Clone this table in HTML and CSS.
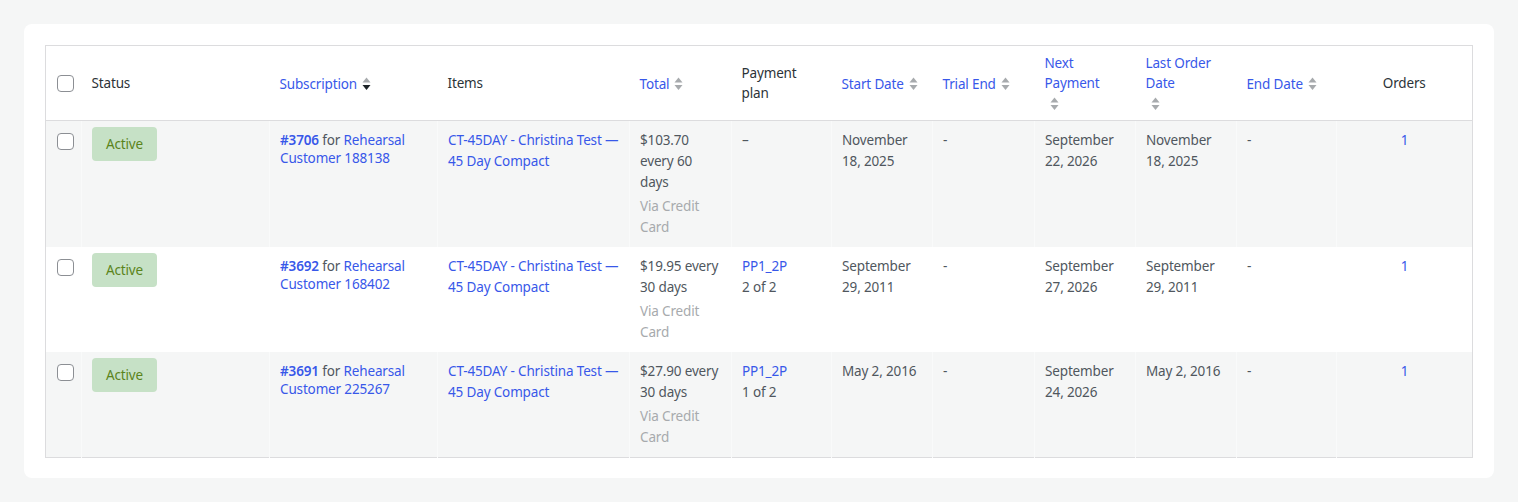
FILE: index.html
```html
<!DOCTYPE html>
<html lang="en">
<head>
<meta charset="utf-8">
<title>Subscriptions</title>
<link rel="stylesheet" href="styles.css">
</head>
<body>
<div class="card">
  <table class="list">
    <colgroup>
      <col class="c-cb"><col class="c-status"><col class="c-sub"><col class="c-items"><col class="c-total"><col class="c-plan"><col class="c-date"><col class="c-trial"><col class="c-date"><col class="c-date"><col class="c-end"><col class="c-orders">
    </colgroup>
    <thead>
      <tr>
        <th class="cb"><input type="checkbox" class="check"></th>
        <th>Status</th>
        <th><a class="sort-link"><span class="lbl">Subscription</span><svg class="sort" width="9" height="14" viewBox="0 0 9 14"><path d="M0.5 5.5 L4.5 0.5 L8.5 5.5 Z" fill="#a7aaad"/><path d="M0.5 8 L4.5 13 L8.5 8 Z" fill="#1d2327"/></svg></a></th>
        <th>Items</th>
        <th><a class="sort-link"><span class="lbl">Total</span><svg class="sort" width="9" height="14" viewBox="0 0 9 14"><path d="M0.5 5.5 L4.5 0.5 L8.5 5.5 Z" fill="#a7aaad"/><path d="M0.5 8 L4.5 13 L8.5 8 Z" fill="#a7aaad"/></svg></a></th>
        <th>Payment plan</th>
        <th><a class="sort-link"><span class="lbl">Start Date</span><svg class="sort" width="9" height="14" viewBox="0 0 9 14"><path d="M0.5 5.5 L4.5 0.5 L8.5 5.5 Z" fill="#a7aaad"/><path d="M0.5 8 L4.5 13 L8.5 8 Z" fill="#a7aaad"/></svg></a></th>
        <th><a class="sort-link"><span class="lbl">Trial End</span><svg class="sort" width="9" height="14" viewBox="0 0 9 14"><path d="M0.5 5.5 L4.5 0.5 L8.5 5.5 Z" fill="#a7aaad"/><path d="M0.5 8 L4.5 13 L8.5 8 Z" fill="#a7aaad"/></svg></a></th>
        <th><a class="sort-link"><span class="lbl">Next Payment</span><svg class="sort" width="9" height="14" viewBox="0 0 9 14"><path d="M0.5 5.5 L4.5 0.5 L8.5 5.5 Z" fill="#a7aaad"/><path d="M0.5 8 L4.5 13 L8.5 8 Z" fill="#a7aaad"/></svg></a></th>
        <th><a class="sort-link"><span class="lbl">Last Order Date</span><svg class="sort" width="9" height="14" viewBox="0 0 9 14"><path d="M0.5 5.5 L4.5 0.5 L8.5 5.5 Z" fill="#a7aaad"/><path d="M0.5 8 L4.5 13 L8.5 8 Z" fill="#a7aaad"/></svg></a></th>
        <th><a class="sort-link"><span class="lbl">End Date</span><svg class="sort" width="9" height="14" viewBox="0 0 9 14"><path d="M0.5 5.5 L4.5 0.5 L8.5 5.5 Z" fill="#a7aaad"/><path d="M0.5 8 L4.5 13 L8.5 8 Z" fill="#a7aaad"/></svg></a></th>
        <th class="center">Orders</th>
      </tr>
    </thead>
    <tbody>
      <tr class="alt">
        <td class="cb"><input type="checkbox" class="check"></td>
        <td><span class="badge">Active</span></td>
        <td><div class="sub"><a class="strong">#3706</a> for <a>Rehearsal Customer 188138</a></div></td>
        <td><a>CT-45DAY - Christina Test — 45 Day Compact</a></td>
        <td><div>$103.70 every 60 days</div><div class="via">Via Credit Card</div></td>
        <td>–</td>
        <td>November 18, 2025</td>
        <td>-</td>
        <td>September 22, 2026</td>
        <td>November 18, 2025</td>
        <td>-</td>
        <td class="center"><a>1</a></td>
      </tr>
      <tr>
        <td class="cb"><input type="checkbox" class="check"></td>
        <td><span class="badge">Active</span></td>
        <td><div class="sub"><a class="strong">#3692</a> for <a>Rehearsal Customer 168402</a></div></td>
        <td><a>CT-45DAY - Christina Test — 45 Day Compact</a></td>
        <td><div>$19.95 every 30 days</div><div class="via">Via Credit Card</div></td>
        <td><a>PP1_2P</a><div>2 of 2</div></td>
        <td>September 29, 2011</td>
        <td>-</td>
        <td>September 27, 2026</td>
        <td>September 29, 2011</td>
        <td>-</td>
        <td class="center"><a>1</a></td>
      </tr>
      <tr class="alt">
        <td class="cb"><input type="checkbox" class="check"></td>
        <td><span class="badge">Active</span></td>
        <td><div class="sub"><a class="strong">#3691</a> for <a>Rehearsal Customer 225267</a></div></td>
        <td><a>CT-45DAY - Christina Test — 45 Day Compact</a></td>
        <td><div>$27.90 every 30 days</div><div class="via">Via Credit Card</div></td>
        <td><a>PP1_2P</a><div>1 of 2</div></td>
        <td>May 2, 2016</td>
        <td>-</td>
        <td>September 24, 2026</td>
        <td>May 2, 2016</td>
        <td>-</td>
        <td class="center"><a>1</a></td>
      </tr>
    </tbody>
  </table>
</div>
</body>
</html>
```

FILE: styles.css
```css
html, body {
  margin: 0;
  padding: 0;
}
body {
  background: #f5f6f6;
  font-family: "Noto Sans", "Open Sans", sans-serif;
  font-size: 13.5px;
  letter-spacing: -0.15px;
  color: #50575e;
  padding: 24px;
}
.card {
  background: #fff;
  border-radius: 8px;
  padding: 21px 21px 20px;
}
.list {
  width: 100%;
  table-layout: fixed;
  border-collapse: collapse;
  border: 1px solid #dcdcde;
}
.c-cb { width: 36px; }
.c-status { width: 188px; }
.c-sub { width: 168px; }
.c-items { width: 192px; }
.c-total { width: 102px; }
.c-plan { width: 100px; }
.c-date { width: 101px; }
.c-trial { width: 102px; }
.c-end { width: 100px; }
.c-orders { width: auto; }

a {
  color: #3858e9;
  text-decoration: none;
}
th {
  height: 74px;
  padding: 0 10px;
  text-align: left;
  font-weight: 400;
  color: #2c3338;
  line-height: 20px;
  vertical-align: middle;
  border-bottom: 1px solid #dcdcde;
}
.sort-link .lbl {
  display: inline-block;
  vertical-align: middle;
}
.sort {
  display: inline-block;
  vertical-align: middle;
  margin-left: 5px;
}
td {
  padding: 9px 10px 9px;
  line-height: 21px;
  vertical-align: top;
  border-left: 1px solid transparent;
}
tr.alt td {
  background: #f5f6f6;
  border-left-color: #f9fafa;
}
td:first-child { border-left: none; }
.cb {
  padding-left: 11px;
  padding-right: 0;
}
td.cb {
  padding-top: 12px;
}
.check {
  appearance: none;
  -webkit-appearance: none;
  display: block;
  width: 17px;
  height: 17px;
  margin: 0;
  border: 1px solid #8c8f94;
  border-radius: 4px;
  background: #fff;
  box-sizing: border-box;
}
.center { text-align: center; }
.badge {
  display: inline-block;
  margin-top: -3px;
  height: 34px;
  line-height: 34px;
  padding: 0 14px;
  border-radius: 4px;
  background: #c6e1c6;
  color: #5b841b;
}
.sub {
  line-height: 18px;
  padding-top: 1px;
}
.strong { font-weight: 600; }
.via {
  color: #a7aaad;
  margin-top: 3px;
}
```
